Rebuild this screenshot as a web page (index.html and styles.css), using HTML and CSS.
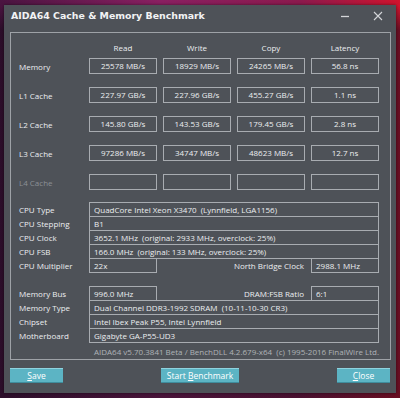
FILE: index.html
```html
<!DOCTYPE html>
<html lang="en">
<head>
<meta charset="UTF-8">
<title>AIDA64 Cache &amp; Memory Benchmark</title>
<link rel="stylesheet" href="styles.css">
</head>
<body>
<div class="window">
  <!-- Title bar -->
  <div class="titlebar">
    <span class="title">AIDA64 Cache &amp; Memory Benchmark</span>
    <svg class="ctl min" width="10" height="10" viewBox="0 0 10 10"><path d="M1 5.5h8" stroke="#d4d6d9" stroke-width="1.3"/></svg>
    <svg class="ctl close" width="10" height="10" viewBox="0 0 10 10"><path d="M1 1l8 8M9 1l-8 8" stroke="#d4d6d9" stroke-width="1.1"/></svg>
  </div>

  <div class="frame">
    <!-- Benchmark results -->
    <div class="grid head">
      <span></span><span>Read</span><span>Write</span><span>Copy</span><span>Latency</span>
    </div>
    <div class="grid results">
      <span class="label">Memory</span>
      <span class="box">25578 MB/s</span><span class="box">18929 MB/s</span><span class="box">24265 MB/s</span><span class="box">56.8 ns</span>
      <span class="label">L1 Cache</span>
      <span class="box">227.97 GB/s</span><span class="box">227.96 GB/s</span><span class="box">455.27 GB/s</span><span class="box">1.1 ns</span>
      <span class="label">L2 Cache</span>
      <span class="box">145.80 GB/s</span><span class="box">143.53 GB/s</span><span class="box">179.45 GB/s</span><span class="box">2.8 ns</span>
      <span class="label">L3 Cache</span>
      <span class="box">97286 MB/s</span><span class="box">34747 MB/s</span><span class="box">48623 MB/s</span><span class="box">12.7 ns</span>
      <span class="label dim">L4 Cache</span>
      <span class="box"></span><span class="box"></span><span class="box"></span><span class="box"></span>
    </div>

    <!-- System info -->
    <div class="grid info">
      <span class="label">CPU Type</span><span class="field wide">QuadCore Intel Xeon X3470  (Lynnfield, LGA1156)</span>
      <span class="label">CPU Stepping</span><span class="field wide">B1</span>
      <span class="label">CPU Clock</span><span class="field wide">3652.1 MHz  (original: 2933 MHz, overclock: 25%)</span>
      <span class="label">CPU FSB</span><span class="field wide">166.0 MHz  (original: 133 MHz, overclock: 25%)</span>
      <span class="label">CPU Multiplier</span><span class="field">22x</span>
      <span class="label right">North Bridge Clock</span><span class="field">2988.1 MHz</span>
      <span class="spacer"></span>
      <span class="label">Memory Bus</span><span class="field">996.0 MHz</span>
      <span class="label right">DRAM:FSB Ratio</span><span class="field">6:1</span>
      <span class="label">Memory Type</span><span class="field wide">Dual Channel DDR3-1992 SDRAM  (10-11-10-30 CR3)</span>
      <span class="label">Chipset</span><span class="field wide">Intel Ibex Peak P55, Intel Lynnfield</span>
      <span class="label">Motherboard</span><span class="field wide">Gigabyte GA-P55-UD3</span>
    </div>
    <p class="footer">AIDA64 v5.70.3841 Beta / BenchDLL 4.2.679-x64  (c) 1995-2016 FinalWire Ltd.</p>
  </div>

  <div class="buttons">
    <button class="btn"><u>S</u>ave</button>
    <button class="btn wide-btn">Start <u>B</u>enchmark</button>
    <button class="btn"><u>C</u>lose</button>
  </div>
</div>
</body>
</html>
```

FILE: styles.css
```css
html, body {
  margin: 0;
  height: 100%;
}
body {
  font-family: 'Open Sans', 'Liberation Sans', sans-serif;
  font-size: 8px;
  color: #eceef0;
  background: linear-gradient(180deg, rgba(0,0,0,0) 0, rgba(0,0,0,0) 6px, rgba(20,10,25,.55) 30px),
              linear-gradient(90deg, #4a1440, #8a2062 40%, #8c1a4e 75%, #d0142e);
  padding: 5px 4px 0 4px;
  box-sizing: border-box;
}
.window {
  width: 392px;
  height: 388px;
  background: #4e5258;
  box-sizing: border-box;
  box-shadow: 0 0 3px rgba(0,0,0,.5);
}
.titlebar {
  display: flex;
  align-items: center;
  height: 21px;
  padding: 0 13px 0 7px;
}
.title {
  font-family: 'DejaVu Sans', sans-serif;
  font-weight: bold;
  font-size: 9.4px;
  color: #f2f3f4;
}
.ctl.min {
  margin-left: auto;
}
.ctl.close {
  margin-left: 23px;
}
.frame {
  margin: 6px 5px 0 6px;
  border: 1px solid #9ea2a7;
  padding: 8px 11px 1px 8px;
}
.grid {
  display: grid;
  grid-template-columns: 64px repeat(4, 68px);
  column-gap: 6px;
  align-items: center;
}
.head {
  height: 12px;
  margin-bottom: 5px;
}
.head span {
  text-align: center;
}
.results {
  grid-auto-rows: 16px;
  row-gap: 13px;
}
.box {
  height: 16px;
  line-height: 14px;
  border: 1px solid #a8acb1;
  box-sizing: border-box;
  text-align: center;
  white-space: nowrap;
}
.label {
  white-space: nowrap;
}
.label.dim {
  color: #8c9096;
}
.label.right {
  grid-column: span 2;
  text-align: right;
  padding-right: 1px;
}
.info {
  margin-top: 12px;
  grid-auto-rows: 14px;
}
.field {
  align-self: start;
  height: 15px;
  line-height: 13px;
  border: 1px solid #a8acb1;
  box-sizing: border-box;
  padding-left: 4px;
  white-space: pre;
}
.field.wide {
  grid-column: 2 / -1;
}
.spacer {
  grid-column: 1 / -1;
}
.footer {
  margin: 4px 0 0;
  height: 12px;
  line-height: 12px;
  text-align: right;
  white-space: pre;
  color: #aeb2b7;
}
.buttons {
  display: flex;
  justify-content: space-between;
  margin: 8px 6px 0 6px;
}
.btn {
  width: 53px;
  height: 15px;
  padding: 0;
  border: none;
  border-top: 1px solid #8fd3df;
  border-bottom: 1px solid #3f8d9d;
  background: #5cb4c4;
  color: #fff;
  font-family: 'Open Sans', 'Liberation Sans', sans-serif;
  font-size: 8.5px;
}
.btn.wide-btn {
  width: 78px;
}
```
